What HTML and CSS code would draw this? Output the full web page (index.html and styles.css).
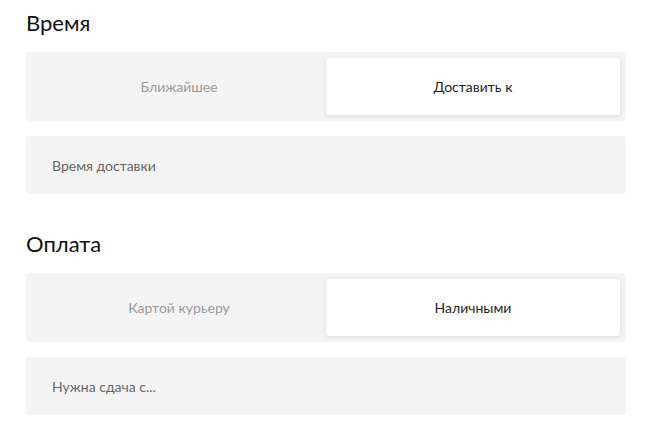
FILE: index.html
```html
<!DOCTYPE html>
<html lang="ru">
<head>
<meta charset="utf-8">
<link rel="stylesheet" href="styles.css">
</head>
<body>
<div class="page">
  <section class="section">
    <h2 class="title">Время</h2>
    <div class="segment">
      <div class="tab">Ближайшее</div>
      <div class="tab active">Доставить к</div>
    </div>
    <div class="field">Время доставки</div>
  </section>
  <section class="section">
    <h2 class="title">Оплата</h2>
    <div class="segment">
      <div class="tab">Картой курьеру</div>
      <div class="tab active">Наличными</div>
    </div>
    <div class="field">Нужна сдача с...</div>
  </section>
</div>
</body>
</html>
```

FILE: styles.css
```css
html, body {
  margin: 0;
  padding: 0;
  background: #ffffff;
}
body {
  font-family: "Lato", "Noto Sans", sans-serif;
}
.page {
  width: 600px;
  padding: 8px 0 0 26px;
  display: flex;
  flex-direction: column;
  gap: 35px;
}
.section {
  display: flex;
  flex-direction: column;
}
.title {
  margin: 0 0 14px 0;
  font-size: 22px;
  line-height: 30px;
  font-weight: 400;
  color: #111;
}
.segment {
  display: grid;
  grid-template-columns: 1fr 1fr;
  padding: 6px;
  background: #f4f4f4;
  border-radius: 4px;
  height: 57px;
}
.tab {
  display: flex;
  align-items: center;
  justify-content: center;
  font-size: 14px;
  color: #9a9a9a;
  border-radius: 3px;
}
.tab.active {
  background: #fff;
  color: #1e1e1e;
  box-shadow: 0 1px 4px rgba(0,0,0,0.12);
}
.field {
  margin-top: 15px;
  height: 58px;
  background: #f4f4f4;
  border-radius: 3px;
  display: flex;
  align-items: center;
  padding-left: 26px;
  font-size: 14px;
  color: #666;
}
```
